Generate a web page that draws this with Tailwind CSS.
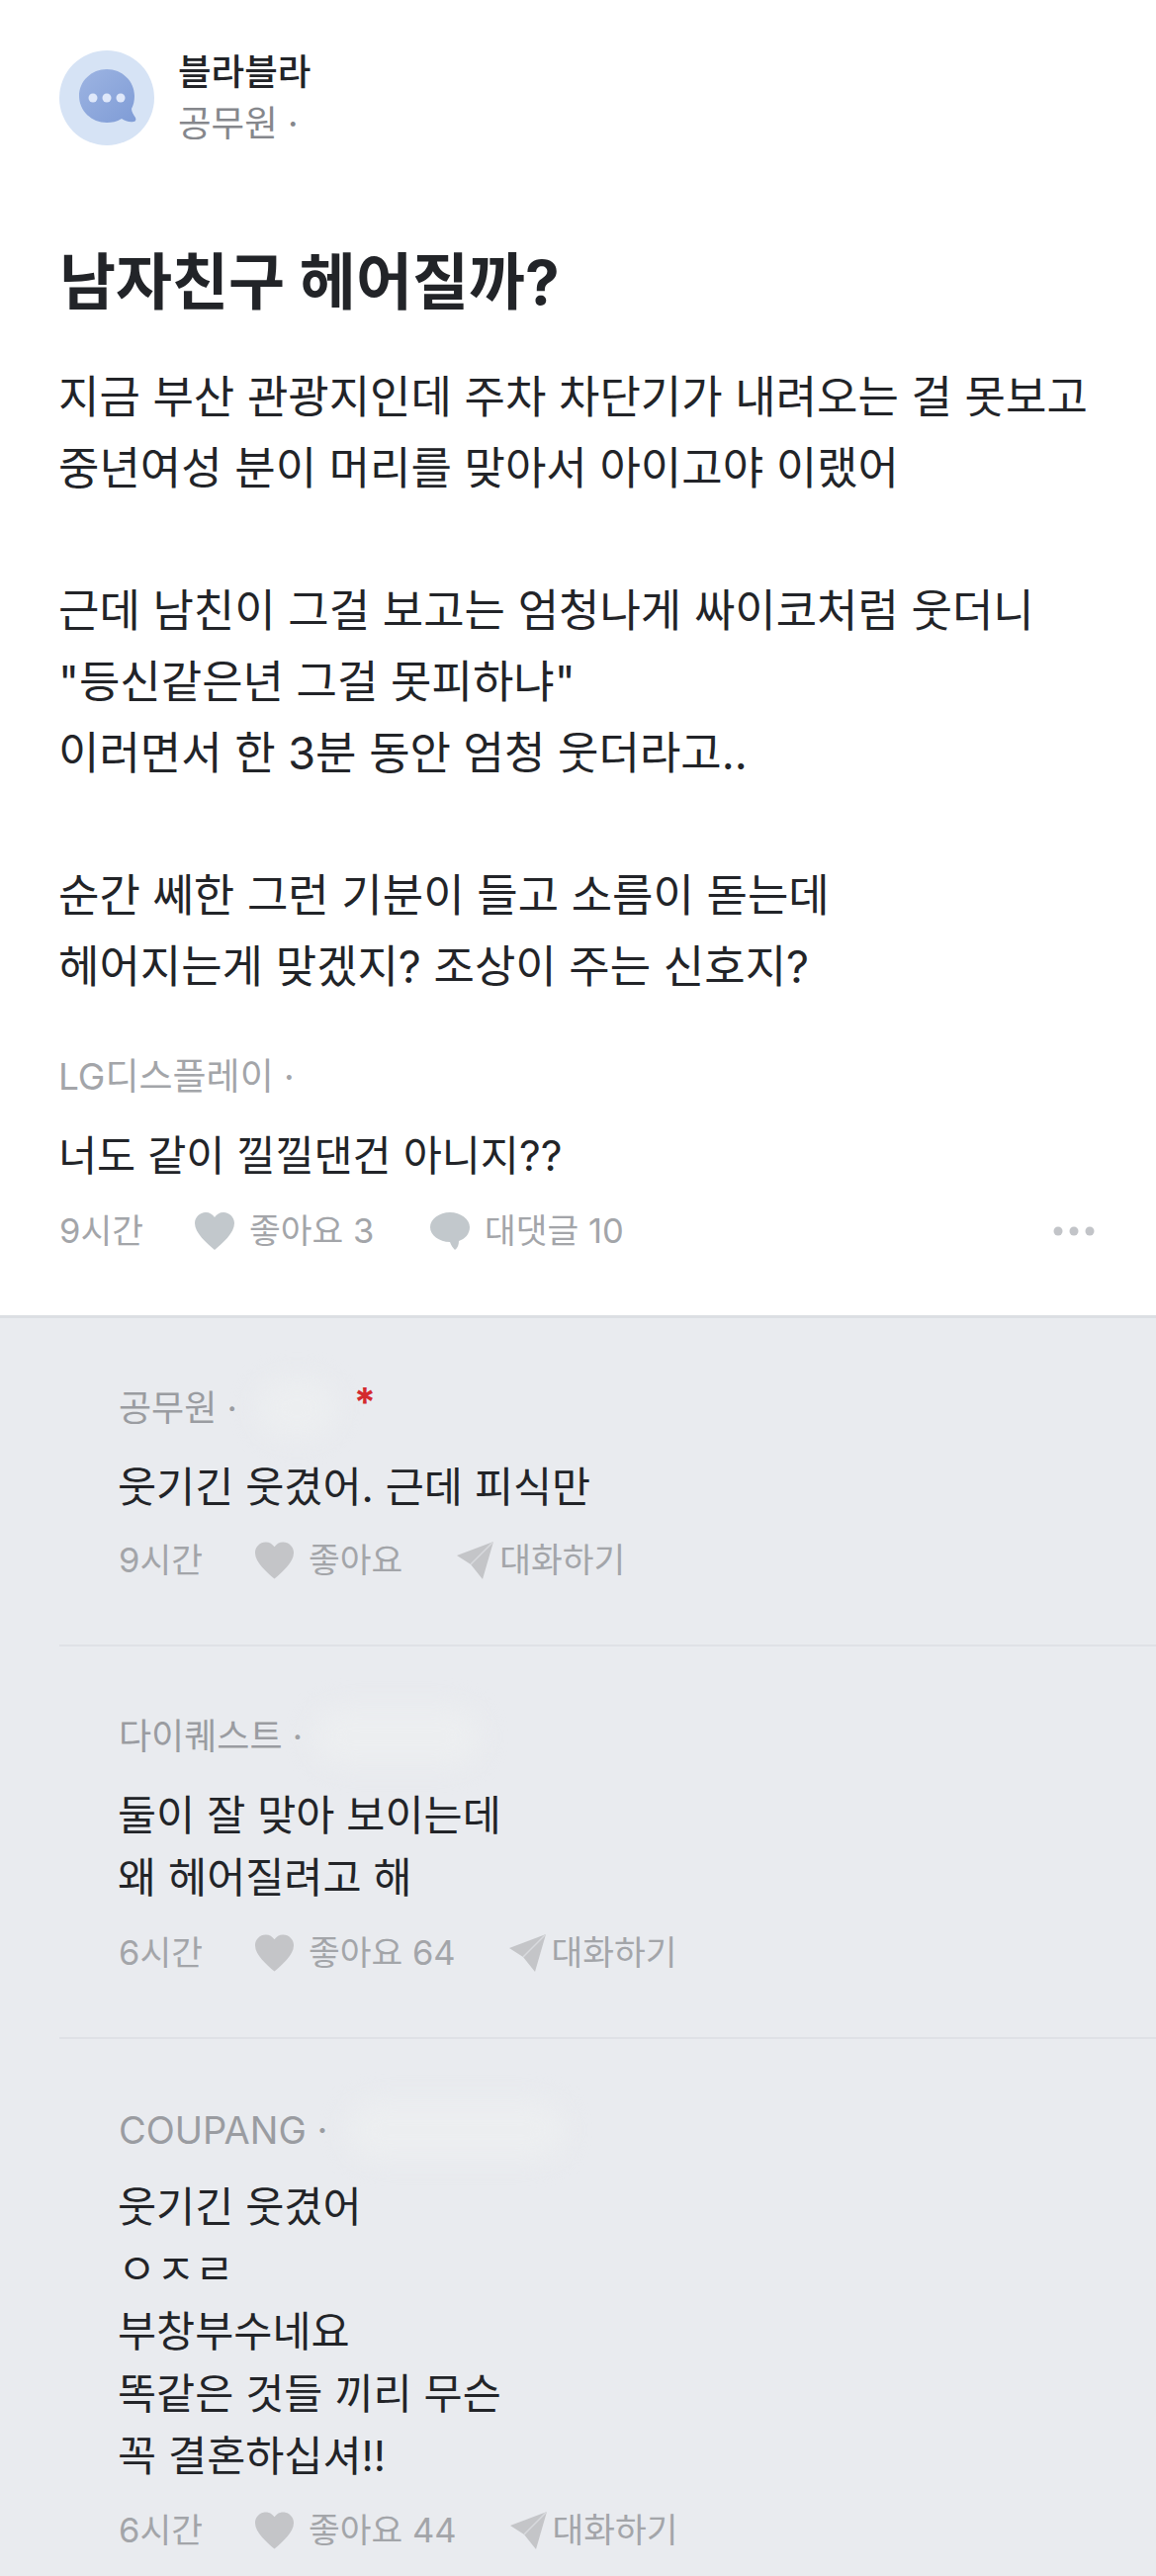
<!DOCTYPE html>
<html lang="ko">
<head>
    <meta charset="UTF-8">
    <meta name="viewport" content="width=device-width, initial-scale=1.0">
    <title>블라블라</title>
    <script src="https://cdn.jsdelivr.net/npm/@tailwindcss/browser@4"></script>
</head>
<body class="w-[1169px] h-[2605px] overflow-hidden bg-[#e9ebef] text-[#222428] font-['Inter','Noto_Sans_CJK_KR',sans-serif]">
    <!-- Post -->
    <section class="bg-white px-[60px] pt-[47px] pb-[60px] border-b-[3px] border-[#dcdfe3]">
        <div class="flex items-center gap-[24px]">
            <svg class="w-[96px] h-[96px] shrink-0" viewBox="0 0 96 96">
                <defs>
                    <linearGradient id="bubble" x1="0" y1="0" x2="1" y2="1">
                        <stop offset="0" stop-color="#9db4e2"/>
                        <stop offset="1" stop-color="#7f9cd6"/>
                    </linearGradient>
                </defs>
                <circle cx="48" cy="48" r="48" fill="#d6e3f5"/>
                <path d="M48 19c15.500 0 28 12 28 27 0 5-1 9-3 13 0 3 2 6 4 9 1 2 0 4-2 4-4 1-9-1-12-3-5 3-10 4-15 4-15.500 0-28-12-28-27s12.500-27 28-27z" fill="url(#bubble)"/>
                <circle cx="34" cy="48" r="4.500" fill="#dfe8fa"/>
                <circle cx="48" cy="48" r="4.500" fill="#dfe8fa"/>
                <circle cx="62" cy="48" r="4.500" fill="#dfe8fa"/>
            </svg>
            <div>
                <p class="text-[36.500px] leading-[52px] font-medium">블라블라</p>
                <p class="text-[36.500px] leading-[52px] text-[#85878c]">공무원 ·</p>
            </div>
        </div>

        <h1 class="mt-[95px] text-[62px] leading-[80px] font-bold">남자친구 헤어질까?</h1>

        <p class="mt-[40px] -ml-[1px] text-[45px] leading-[72px] whitespace-nowrap">지금 부산 관광지인데 주차 차단기가 내려오는 걸 못보고<br>중년여성 분이 머리를 맞아서 아이고야 이랬어<br><br>근데 남친이 그걸 보고는 엄청나게 싸이코처럼 웃더니<br>"등신같은년 그걸 못피하냐"<br>이러면서 한 3분 동안 엄청 웃더라고..<br><br>순간 쎄한 그런 기분이 들고 소름이 돋는데<br>헤어지는게 맞겠지? 조상이 주는 신호지?</p>

        <p class="mt-[50px] -ml-[1px] text-[37px] leading-[50px] text-[#a3a5a9]">LG디스플레이 ·</p>
        <p class="mt-[24px] -ml-[1px] text-[42.500px] leading-[62px]">너도 같이 낄낄댄건 아니지??</p>

        <div class="mt-[20px] h-[50px] flex items-center text-[34.500px] text-[#a3a5a9]">
            <span class="w-[136px]">9시간</span>
            <svg class="w-[42px] h-[38px]" viewBox="0 0 42 38"><path d="M21 38C13 31 1 21 1 11 1 5 6 0 12 0c4 0 7 2 9 5 2-3 5-5 9-5 6 0 11 5 11 11 0 10-12 20-20 27z" fill="#c2c8cc"/></svg>
            <span class="ml-[14px] w-[183px]">좋아요 3</span>
            <svg class="w-[40px] h-[38px]" viewBox="0 0 40 38"><path d="M20 0c11 0 20 7 20 15 0 7-5 12-11 14 0 3-1 7-4 9-2-2-4-5-5-8C9 30 0 23 0 15 0 7 9 0 20 0z" fill="#c2c8cc"/></svg>
            <span class="ml-[15px]">대댓글 10</span>
            <svg class="ml-auto mr-[2px] w-[42px] h-[10px]" viewBox="0 0 42 10"><circle cx="5" cy="5" r="4.500" fill="#c2c4c8"/><circle cx="21" cy="5" r="4.500" fill="#c2c4c8"/><circle cx="37" cy="5" r="4.500" fill="#c2c4c8"/></svg>
        </div>
    </section>

    <!-- Comments -->
    <section class="pl-[60px]">
        <article class="pl-[60px] pt-[66px] pb-[60px] border-b-2 border-[#dfe1e6]">
            <div class="h-[50px] flex items-center text-[36px] text-[#9a9ca1]">
                <span>공무원 ·</span>
                <span class="ml-[20px] w-[80px] h-[60px] rounded-full bg-[#eceef0] blur-md"></span>
                <span class="ml-[18px] -mt-[12px] text-[40px] font-bold text-[#d42a2e]">*</span>
            </div>
            <p class="mt-[23px] -ml-[1px] text-[42.500px] leading-[63px]">웃기긴 웃겼어. 근데 피식만</p>
            <div class="mt-[18px] h-[50px] flex items-center text-[34.500px] text-[#a3a5a9]">
                <span class="w-[137px]">9시간</span>
                <svg class="w-[41px] h-[38px]" viewBox="0 0 42 38"><path d="M21 38C13 31 1 21 1 11 1 5 6 0 12 0c4 0 7 2 9 5 2-3 5-5 9-5 6 0 11 5 11 11 0 10-12 20-20 27z" fill="#c4c5c8"/></svg>
                <span class="ml-[14px]">좋아요</span>
                <svg class="ml-[55px] w-[37px] h-[38px]" viewBox="0 0 37 38"><path d="M37 0 0 14 14 23 26 38z" fill="#c4c5c8"/><path d="M37 0 14 23" stroke="#d8dadd" stroke-width="1.500"/></svg>
                <span class="ml-[6px]">대화하기</span>
            </div>
        </article>

        <article class="pl-[60px] pt-[66px] pb-[60px] border-b-2 border-[#dfe1e6]">
            <div class="h-[50px] flex items-center text-[36px] text-[#9a9ca1]">
                <span>다이퀘스트 ·</span>
                <span class="ml-[10px] w-[170px] h-[60px] rounded-full bg-[#eceef0] blur-md"></span>
            </div>
            <p class="mt-[23px] -ml-[1px] text-[42.500px] leading-[63px]">둘이 잘 맞아 보이는데<br>왜 헤어질려고 해</p>
            <div class="mt-[20px] h-[50px] flex items-center text-[34.500px] text-[#a3a5a9]">
                <span class="w-[137px]">6시간</span>
                <svg class="w-[41px] h-[38px]" viewBox="0 0 42 38"><path d="M21 38C13 31 1 21 1 11 1 5 6 0 12 0c4 0 7 2 9 5 2-3 5-5 9-5 6 0 11 5 11 11 0 10-12 20-20 27z" fill="#c4c5c8"/></svg>
                <span class="ml-[14px]">좋아요 64</span>
                <svg class="ml-[54px] w-[37px] h-[38px]" viewBox="0 0 37 38"><path d="M37 0 0 14 14 23 26 38z" fill="#c4c5c8"/><path d="M37 0 14 23" stroke="#d8dadd" stroke-width="1.500"/></svg>
                <span class="ml-[6px]">대화하기</span>
            </div>
        </article>

        <article class="pl-[60px] pt-[67px]">
            <div class="h-[50px] flex items-center text-[38px] text-[#9a9ca1]">
                <span>COUPANG ·</span>
                <span class="ml-[20px] w-[220px] h-[60px] rounded-full bg-[#eceef0] blur-md"></span>
            </div>
            <p class="mt-[21px] -ml-[1px] text-[42.500px] leading-[63px]">웃기긴 웃겼어<br>ㅇㅈㄹ<br>부창부수네요<br>똑같은 것들 끼리 무슨<br>꼭 결혼하십셔!!</p>
            <div class="mt-[19px] h-[50px] flex items-center text-[34.500px] text-[#a3a5a9]">
                <span class="w-[137px]">6시간</span>
                <svg class="w-[41px] h-[38px]" viewBox="0 0 42 38"><path d="M21 38C13 31 1 21 1 11 1 5 6 0 12 0c4 0 7 2 9 5 2-3 5-5 9-5 6 0 11 5 11 11 0 10-12 20-20 27z" fill="#c4c5c8"/></svg>
                <span class="ml-[14px]">좋아요 44</span>
                <svg class="ml-[54px] w-[37px] h-[38px]" viewBox="0 0 37 38"><path d="M37 0 0 14 14 23 26 38z" fill="#c4c5c8"/><path d="M37 0 14 23" stroke="#d8dadd" stroke-width="1.500"/></svg>
                <span class="ml-[6px]">대화하기</span>
            </div>
        </article>
    </section>
</body>
</html>
